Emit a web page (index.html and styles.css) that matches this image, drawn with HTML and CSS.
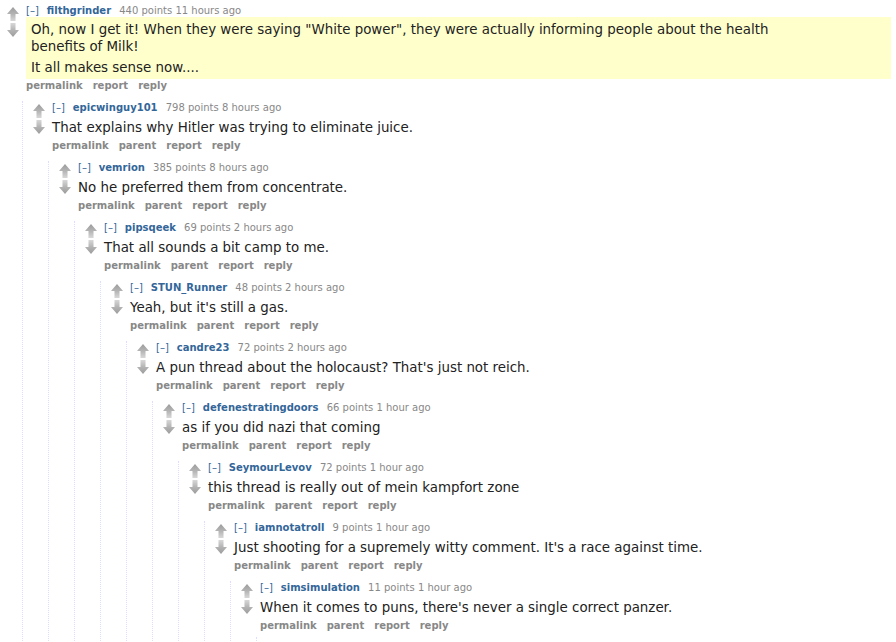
FILE: index.html
```html
<!DOCTYPE html>
<html lang="en">
<head>
<meta charset="UTF-8">
<meta name="viewport" content="width=device-width, initial-scale=1.0">
<title>comments</title>
<link rel="stylesheet" href="styles.css">
</head>
<body>
<div class="comments">

<div class="comment">
  <div class="thing">
    <div class="midcol"><div class="arrow up"></div><div class="arrow down"></div></div>
    <div class="entry">
      <p class="tagline"><a class="expand" href="#">[–]</a><a class="author" href="#">filthgrinder</a> 440 points 11 hours ago</p>
      <div class="usertext new">
        <p>Oh, now I get it! When they were saying "White power", they were actually informing people about the health benefits of Milk!</p>
        <p>It all makes sense now....</p>
      </div>
      <ul class="buttons"><li><a href="#">permalink</a></li><li><a href="#">report</a></li><li><a href="#">reply</a></li></ul>
    </div>
  </div>
  <div class="child">

  <div class="comment">
    <div class="thing">
      <div class="midcol"><div class="arrow up"></div><div class="arrow down"></div></div>
      <div class="entry">
        <p class="tagline"><a class="expand" href="#">[–]</a><a class="author" href="#">epicwinguy101</a> 798 points 8 hours ago</p>
        <div class="usertext"><p>That explains why Hitler was trying to eliminate juice.</p></div>
        <ul class="buttons"><li><a href="#">permalink</a></li><li><a href="#">parent</a></li><li><a href="#">report</a></li><li><a href="#">reply</a></li></ul>
      </div>
    </div>
    <div class="child">

    <div class="comment">
      <div class="thing">
        <div class="midcol"><div class="arrow up"></div><div class="arrow down"></div></div>
        <div class="entry">
          <p class="tagline"><a class="expand" href="#">[–]</a><a class="author" href="#">vemrion</a> 385 points 8 hours ago</p>
          <div class="usertext"><p>No he preferred them from concentrate.</p></div>
          <ul class="buttons"><li><a href="#">permalink</a></li><li><a href="#">parent</a></li><li><a href="#">report</a></li><li><a href="#">reply</a></li></ul>
        </div>
      </div>
      <div class="child">

      <div class="comment">
        <div class="thing">
          <div class="midcol"><div class="arrow up"></div><div class="arrow down"></div></div>
          <div class="entry">
            <p class="tagline"><a class="expand" href="#">[–]</a><a class="author" href="#">pipsqeek</a> 69 points 2 hours ago</p>
            <div class="usertext"><p>That all sounds a bit camp to me.</p></div>
            <ul class="buttons"><li><a href="#">permalink</a></li><li><a href="#">parent</a></li><li><a href="#">report</a></li><li><a href="#">reply</a></li></ul>
          </div>
        </div>
        <div class="child">

        <div class="comment">
          <div class="thing">
            <div class="midcol"><div class="arrow up"></div><div class="arrow down"></div></div>
            <div class="entry">
              <p class="tagline"><a class="expand" href="#">[–]</a><a class="author" href="#">STUN_Runner</a> 48 points 2 hours ago</p>
              <div class="usertext"><p>Yeah, but it's still a gas.</p></div>
              <ul class="buttons"><li><a href="#">permalink</a></li><li><a href="#">parent</a></li><li><a href="#">report</a></li><li><a href="#">reply</a></li></ul>
            </div>
          </div>
          <div class="child">

          <div class="comment">
            <div class="thing">
              <div class="midcol"><div class="arrow up"></div><div class="arrow down"></div></div>
              <div class="entry">
                <p class="tagline"><a class="expand" href="#">[–]</a><a class="author" href="#">candre23</a> 72 points 2 hours ago</p>
                <div class="usertext"><p>A pun thread about the holocaust? That's just not reich.</p></div>
                <ul class="buttons"><li><a href="#">permalink</a></li><li><a href="#">parent</a></li><li><a href="#">report</a></li><li><a href="#">reply</a></li></ul>
              </div>
            </div>
            <div class="child">

            <div class="comment">
              <div class="thing">
                <div class="midcol"><div class="arrow up"></div><div class="arrow down"></div></div>
                <div class="entry">
                  <p class="tagline"><a class="expand" href="#">[–]</a><a class="author" href="#">defenestratingdoors</a> 66 points 1 hour ago</p>
                  <div class="usertext"><p>as if you did nazi that coming</p></div>
                  <ul class="buttons"><li><a href="#">permalink</a></li><li><a href="#">parent</a></li><li><a href="#">report</a></li><li><a href="#">reply</a></li></ul>
                </div>
              </div>
              <div class="child">

              <div class="comment">
                <div class="thing">
                  <div class="midcol"><div class="arrow up"></div><div class="arrow down"></div></div>
                  <div class="entry">
                    <p class="tagline"><a class="expand" href="#">[–]</a><a class="author" href="#">SeymourLevov</a> 72 points 1 hour ago</p>
                    <div class="usertext"><p>this thread is really out of mein kampfort zone</p></div>
                    <ul class="buttons"><li><a href="#">permalink</a></li><li><a href="#">parent</a></li><li><a href="#">report</a></li><li><a href="#">reply</a></li></ul>
                  </div>
                </div>
                <div class="child">

                <div class="comment">
                  <div class="thing">
                    <div class="midcol"><div class="arrow up"></div><div class="arrow down"></div></div>
                    <div class="entry">
                      <p class="tagline"><a class="expand" href="#">[–]</a><a class="author" href="#">iamnotatroll</a> 9 points 1 hour ago</p>
                      <div class="usertext"><p>Just shooting for a supremely witty comment. It's a race against time.</p></div>
                      <ul class="buttons"><li><a href="#">permalink</a></li><li><a href="#">parent</a></li><li><a href="#">report</a></li><li><a href="#">reply</a></li></ul>
                    </div>
                  </div>
                  <div class="child">

                  <div class="comment">
                    <div class="thing">
                      <div class="midcol"><div class="arrow up"></div><div class="arrow down"></div></div>
                      <div class="entry">
                        <p class="tagline"><a class="expand" href="#">[–]</a><a class="author" href="#">simsimulation</a> 11 points 1 hour ago</p>
                        <div class="usertext"><p>When it comes to puns, there's never a single correct panzer.</p></div>
                        <ul class="buttons"><li><a href="#">permalink</a></li><li><a href="#">parent</a></li><li><a href="#">report</a></li><li><a href="#">reply</a></li></ul>
                      </div>
                    </div>
                    <div class="child">
                      <div class="comment stub"></div>
                    </div>
                  </div>

                  </div>
                </div>

                </div>
              </div>

              </div>
            </div>

            </div>
          </div>

          </div>
        </div>

        </div>
      </div>

      </div>
    </div>

    </div>
  </div>

  </div>
</div>

</div>
</body>
</html>
```

FILE: styles.css
```css
/* old style comment tree */

body {
    margin: 0;
    background: #fff;
    color: #222;
    font-family: "DejaVu Sans", Verdana, sans-serif;
    font-size: 10px;
}
a {
    text-decoration: none;
}

.comments > .comment {
    margin-top: 4px;
}
.comment {
    margin-top: 8px;
}
.thing {
    display: flex;
}

/* vote arrows */
.midcol {
    flex: none;
    display: flex;
    flex-direction: column;
    gap: 2px;
    width: 12px;
    margin: 0 7px 0 7px;
    padding-top: 3px;
}
.arrow {
    width: 12px;
    height: 14px;
}
.arrow.up {
    background: linear-gradient(#9c9c9c, #b4b4b4 50%, #d8d8d8);
    clip-path: polygon(50% 0, 100% 50%, 71% 50%, 71% 100%, 29% 100%, 29% 50%, 0 50%);
}
.arrow.down {
    background: linear-gradient(#d8d8d8, #b4b4b4 50%, #9c9c9c);
    clip-path: polygon(29% 0, 71% 0, 71% 50%, 100% 50%, 50% 100%, 0 50%, 29% 50%);
}

.entry {
    flex: 1;
    min-width: 0;
    margin-right: 5px;
}
.tagline {
    margin: 0;
    line-height: 14px;
    color: #888;
}
.expand {
    color: #369;
    margin-right: 8px;
}
.author {
    color: #369;
    font-weight: bold;
    margin-right: 5px;
}

.usertext {
    margin: 4px 0 3px;
    font-size: 13.4px;
    line-height: 17px;
}
.usertext p {
    margin: 0;
    max-width: 57em;
}
.usertext p + p {
    margin-top: 4px;
}
.usertext.new {
    margin: -1px 0 0;
    padding: 4px 5px 3px;
    background: #ffc;
}

.buttons {
    display: flex;
    gap: 10px;
    margin: 0;
    padding: 0;
    list-style: none;
    line-height: 14px;
}
.buttons a {
    color: #888;
    font-weight: bold;
}

.child {
    margin-left: 22px;
    padding-left: 3px;
    border-left: 1px dotted #ddf;
}
/* next reply starts just below the fold */
.comment.stub {
    margin-top: 4px;
    height: 6px;
}
```
